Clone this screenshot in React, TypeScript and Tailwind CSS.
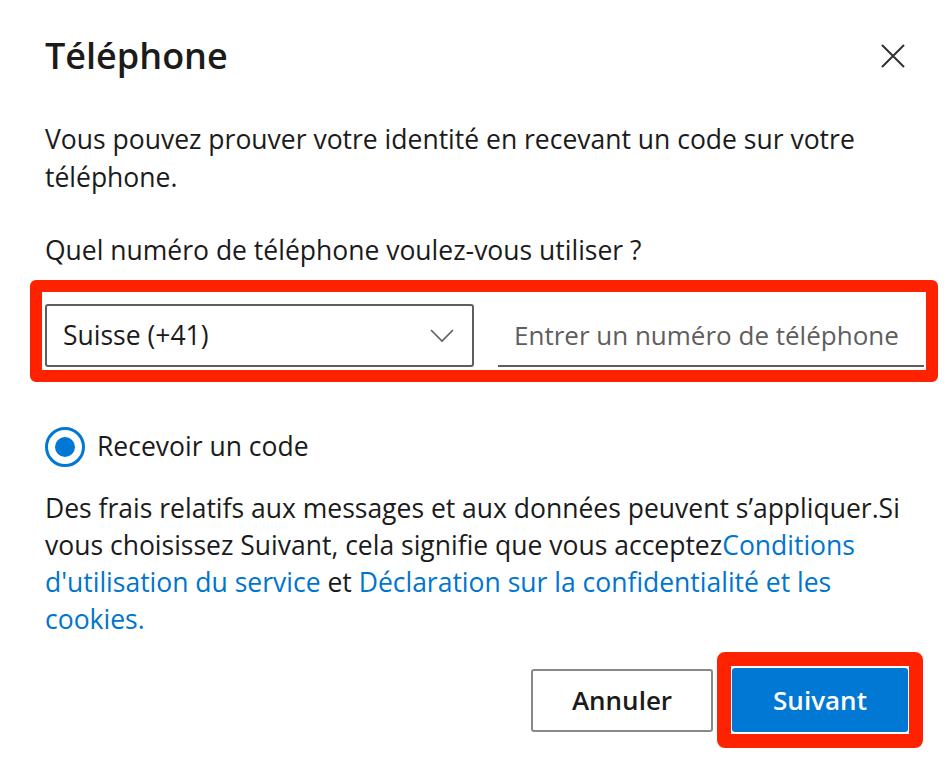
import { useState } from 'react';

const font = "font-['Open_Sans','Noto_Sans',sans-serif]";

function CloseIcon() {
  return (
    <svg width="24" height="24" viewBox="0 0 24 24" className="text-[#323130]">
      <path d="M1 1 L23 23 M23 1 L1 23" stroke="currentColor" strokeWidth="2" fill="none" />
    </svg>
  );
}

function Chevron() {
  return (
    <svg width="24" height="14" viewBox="0 0 24 14" className="text-[#605e5c]">
      <path d="M1 1 L12 12 L23 1" stroke="currentColor" strokeWidth="1.6" fill="none" />
    </svg>
  );
}

export default function App() {
  const [phone, setPhone] = useState('');

  return (
    <div className={`w-[950px] h-[776px] bg-white px-[45px] text-[#1b1b1b] ${font}`}>
      {/* header */}
      <div className="flex items-center justify-between pt-[34px]">
        <h1 className="text-[36px] leading-[44px] font-semibold">Téléphone</h1>
        <button type="button" aria-label="Fermer" className="flex items-center justify-center">
          <CloseIcon />
        </button>
      </div>

      <p className="mt-[42px] text-[26.5px] leading-[38px]">
        Vous pouvez prouver votre identité en recevant un code sur votre téléphone.
      </p>

      <p className="mt-[35px] text-[26.5px] leading-[38px]">Quel numéro de téléphone voulez-vous utiliser ?</p>

      {/* annotated phone row */}
      <div className="mt-[11px] -ml-[15px] -mr-[33px] border-[12px] border-[#ff2200] rounded-[6px] pl-[3px] pr-[2px] pt-[12px] pb-[3px]">
        <div className="flex gap-[24px]">
          <div className="w-[429px] h-[63px] border-2 border-[#605e5c] rounded-[3px] flex items-center justify-between pl-[16px] pr-[18px]">
            <span className="text-[26.5px] text-[#1b1b1b]">Suisse (+41)</span>
            <Chevron />
          </div>
          <input
            value={phone}
            onChange={e => setPhone(e.target.value)}
            placeholder="Entrer un numéro de téléphone"
            className="flex-1 min-w-0 h-[63px] border-b-2 border-[#605e5c] pl-[16px] text-[26px] text-[#1b1b1b] placeholder:text-[#605e5c] outline-none"
          />
        </div>
      </div>

      {/* radio */}
      <label className="mt-[45px] flex items-center gap-[12px] h-[40px]">
        <span className="w-[40px] h-[40px] rounded-full border-[3px] border-[#0078d4] flex items-center justify-center">
          <span className="w-[20px] h-[20px] rounded-full bg-[#0078d4]" />
        </span>
        <span className="text-[26.5px]">Recevoir un code</span>
      </label>

      <p className="mt-[23px] text-[26.5px] leading-[37px]">
        Des frais relatifs aux messages et aux données peuvent s’appliquer.Si vous choisissez Suivant, cela signifie
        que vous acceptez<a className="text-[#0075cf]">Conditions d'utilisation du service</a> et{' '}
        <a className="text-[#0075cf]">Déclaration sur la confidentialité et les cookies.</a>
      </p>

      {/* actions */}
      <div className="mt-[14px] -mr-[18px] flex items-center justify-end gap-[4px]">
        <button
          type="button"
          className="w-[182px] h-[63px] border-2 border-[#8a8886] rounded-[3px] text-[26px] font-semibold text-[#1b1b1b]"
        >
          Annuler
        </button>
        <div className="border-[14px] border-[#ff2200] rounded-[8px] px-[1px] py-[2px]">
          <button
            type="button"
            className="w-[176px] h-[64px] bg-[#0078d4] rounded-[3px] text-[26px] font-semibold text-white"
          >
            Suivant
          </button>
        </div>
      </div>
    </div>
  );
}
